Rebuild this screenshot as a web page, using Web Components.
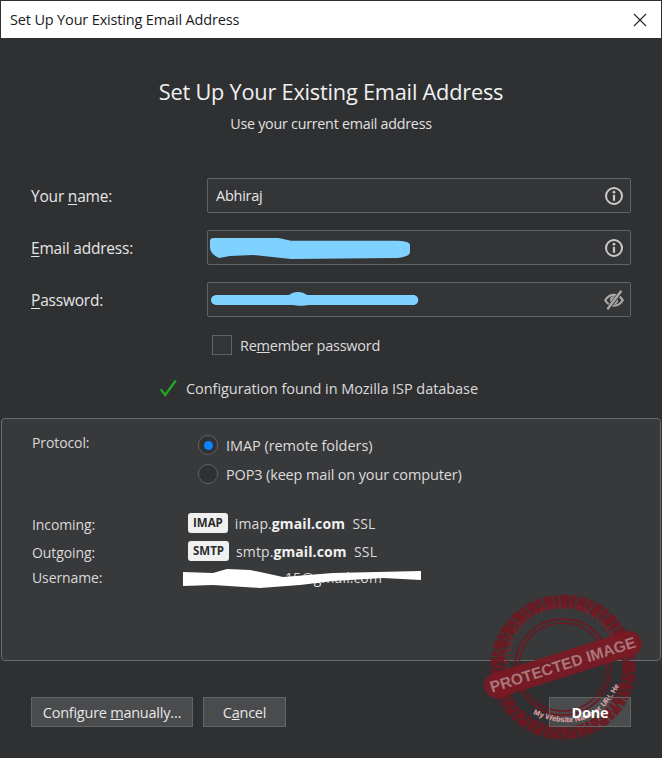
<!DOCTYPE html>
<html lang="en"><head><meta charset="utf-8"><title>Set Up Your Existing Email Address</title>
<style>
html,body{margin:0;padding:0;background:#2f3032}
body{width:662px;height:758px;overflow:hidden;font-family:"Open Sans","Noto Sans","Liberation Sans",sans-serif;color:#e6e6e7}
</style></head><body>
<account-dialog></account-dialog>
<script>
function def(name,html){
  customElements.define(name,class extends HTMLElement{
    connectedCallback(){
      if(this.shadowRoot)return;
      const r=this.attachShadow({mode:'open'});
      r.innerHTML=typeof html==='function'?html(this):html;
    }
  });
}
const info='<svg width="20" height="20" viewBox="0 0 20 20" fill="none"><circle cx="10" cy="10" r="8" stroke="#c9c9ca" stroke-width="2"/><circle cx="10" cy="6.200" r="1.400" fill="#c9c9ca"/><rect x="8.900" y="8.800" width="2.200" height="6" fill="#c9c9ca"/></svg>';
const eye='<svg width="20" height="20" viewBox="0 0 20 20" fill="none"><path d="M1.200 10.200C3.400 6.600 6.400 4.800 10 4.800s6.600 1.800 8.800 5.400C16.600 13.800 13.600 15.600 10 15.600S3.400 13.800 1.200 10.200Z" stroke="#a9a9aa" stroke-width="2.200"/><circle cx="10" cy="10.200" r="4" fill="#a9a9aa"/><path d="M16.800 2 4 18.500" stroke="#343537" stroke-width="3.800"/><path d="M16.800 1.600 4 18.400" stroke="#a9a9aa" stroke-width="2.400" stroke-linecap="round"/></svg>';

def('title-bar',`<style>:host{display:flex;align-items:center;justify-content:space-between;height:37px;margin:1px 1px 0 1px;background:#fff;color:#1b1b1b;font-size:14.500px;padding:0 14px 0 9px;box-sizing:border-box}
svg{display:block}span{letter-spacing:-.16px}</style><span>Set Up Your Existing Email Address</span><svg width="14" height="14" viewBox="0 0 14 14"><path d="M1 1l12 12M13 1L1 13" stroke="#222" stroke-width="1.100"/></svg>`);

def('dialog-heading',`<style>:host{display:block;text-align:center;padding-top:39px;height:140px;box-sizing:border-box}
h1{margin:0;font-size:21.750px;font-weight:400;line-height:30px;color:#f0f0f1;letter-spacing:-.22px}
p{margin:7px 0 0;font-size:14.300px;line-height:20px;color:#e0e0e1;letter-spacing:-.25px}</style><h1>Set Up Your Existing Email Address</h1><p>Use your current email address</p>`);

def('form-field',el=>`<style>:host{display:grid;grid-template-columns:176px 424px;align-items:center;height:35px}
label{font-size:15.500px;letter-spacing:-.2px;color:#e6e6e7}u{text-underline-offset:2px}
.box{position:relative;box-sizing:border-box;height:35px;border:1px solid #626365;border-radius:2px;background:#343537;display:flex;align-items:center;justify-content:space-between;padding:0 6px 0 8px;font-size:14.500px;color:#e6e6e7;letter-spacing:-.25px}
svg{display:block}</style>
<label>${el.getAttribute('label')}</label><div class="box"><span>${el.getAttribute('value')||''}</span>${el.getAttribute('icon')==='eye'?eye:info}</div>`);

def('check-row',`<style>:host{display:flex;align-items:center;gap:8px;margin-left:212px;height:20px;font-size:14.500px;color:#dcdcdd;letter-spacing:-.25px}
i{display:block;box-sizing:border-box;width:20px;height:20px;border:1px solid #606163;background:#333436}</style><i></i><span>Re<u>m</u>ember password</span>`);

def('status-row',`<style>:host{display:flex;align-items:center;gap:9px;margin-left:159px;height:20px;font-size:14.500px;color:#dcdcdd;letter-spacing:-.06px}
svg{display:block}</style><svg width="18" height="18" viewBox="0 0 18 18" fill="none"><path d="M1.800 10.200 6.200 16 16.800 1.500" stroke="#22a422" stroke-width="2.300"/></svg><span>Configuration found in Mozilla ISP database</span>`);

def('radio-row',el=>`<style>:host{display:flex;align-items:center;gap:8px;height:20px;font-size:14.500px;color:#dcdcdd;letter-spacing:${el.getAttribute('spacing')||'-.06px'}}
i{box-sizing:border-box;width:20px;height:20px;border-radius:50%;border:1px solid #5f6062;background:#303133;display:flex;align-items:center;justify-content:center}
b{width:9px;height:9px;border-radius:50%;background:#0a84ff}</style><i>${el.hasAttribute('checked')?'<b></b>':''}</i><span><slot></slot></span>`);

def('server-row',el=>{
  const t=el.getAttribute('tag');
  return `<style>:host{display:grid;grid-template-columns:156px 1fr;align-items:center;height:20px;font-size:14px;color:#d8d8d9;letter-spacing:.1px}
  .l{padding-top:${t?'3px':'0'};letter-spacing:-.1px}
  .r{display:flex;align-items:center;gap:7px;color:#dcdcdd}.t{background:#f0f0f1;color:#2b2b2d;font-weight:700;font-size:11.500px;border-radius:3px;height:20px;line-height:20px;padding:0 5px;letter-spacing:0}</style><span class="l">${el.getAttribute('label')}</span><div class="r">${t?`<span class="t">${t}</span>`:''}<span><slot></slot></span></div>`});

def('flat-button',`<style>:host{display:inline-flex;align-items:center;justify-content:center;box-sizing:border-box;height:30px;background:#4a4b4d;border:1px solid #636466;font-size:14.500px;color:#e6e6e7;letter-spacing:-.25px}</style><slot></slot>`);

def('config-panel',`<style>:host{display:block;box-sizing:border-box;height:243px;margin:0 1px;border:1px solid #6a6b6d;border-radius:4px;background:#38393b;padding:14px 30px 0}
.top{display:grid;grid-template-columns:166px 1fr;font-size:14px;color:#d8d8d9;letter-spacing:-.1px}
.opts{display:flex;flex-direction:column;gap:9px;padding-top:2px}
.srv{display:flex;flex-direction:column;margin-top:28px;gap:8px}</style>
<div class="top"><span>Protocol:</span><div class="opts"><radio-row checked>IMAP (remote folders)</radio-row><radio-row spacing="-.15px">POP3 (keep mail on your computer)</radio-row></div></div>
<div class="srv"><slot></slot></div>`);

def('protected-stamp',`<style>:host{position:absolute;left:484px;top:592px;width:160px;height:150px;pointer-events:none;z-index:1}svg{display:block;overflow:visible}</style>
<svg width="160" height="150" viewBox="0 0 160 150">
<defs><path id="top" d="M27 84A53 53 0 0 1 128 52"/><path id="bot" d="M49 122Q108 148 136 92"/></defs>
<g fill="none" stroke="#701720" opacity=".85"><circle cx="79" cy="75" r="69" stroke-width="7" stroke-dasharray="5 2 9 1.500"/><circle cx="79" cy="75" r="63" stroke-width="7" stroke-dasharray="8 1.500 4 2"/><circle cx="79" cy="75" r="48" stroke-width="2"/><circle cx="79" cy="75" r="44" stroke-width="1.500"/></g>
<text font-family="Liberation Sans" font-size="7.500" fill="#7e1f29" font-weight="700" letter-spacing=".6"><textPath href="#top">CONTENT COPY PROTECTION PLUGIN</textPath></text>
<g transform="rotate(-17.500 79 73)"><rect x="-3" y="60" width="164" height="25" rx="12.500" fill="#7d1a23" opacity=".9"/>
<text x="79" y="78" text-anchor="middle" textLength="152" lengthAdjust="spacing" font-family="Liberation Sans" font-size="15.500" font-weight="700" fill="#a9777b">PROTECTED IMAGE</text></g>
<text font-family="Liberation Sans" font-size="7.500" fill="#e7a7ac" font-weight="700" textLength="110"><textPath href="#bot">My Website Name or URL Here</textPath></text>
</svg>`);

def('account-dialog',`<style>:host{display:block;height:758px;position:relative;overflow:hidden;background:#2f3032}
.fields{display:flex;flex-direction:column;gap:17px;padding:0 31px}
.rem{margin-top:18px}.st{margin-top:23px}.pan{margin-top:20px}
.btns{display:flex;justify-content:space-between;padding:36px 31px 0}.l{display:flex;gap:10px}
.cm{width:162px}.ca{width:83px}.dn{width:82px;font-weight:700;color:#fff;background:transparent}
.dnw{position:relative;z-index:2}
svg{position:absolute;display:block}
.wrap{position:relative}
.bg{position:absolute;left:549px;top:697px;width:82px;height:30px;background:#4a4b4d}</style>
<title-bar></title-bar>
<dialog-heading></dialog-heading>
<div class="fields wrap">
<form-field label="Your &lt;u&gt;n&lt;/u&gt;ame:" value="Abhiraj"></form-field>
<form-field label="&lt;u&gt;E&lt;/u&gt;mail address:"></form-field>
<form-field label="&lt;u&gt;P&lt;/u&gt;assword:" icon="eye"></form-field>
<svg style="left:208px;top:52px" width="206" height="36" viewBox="0 0 206 36"><path d="M6 8H70.500L83 10.700H190Q202 11 202 15V23Q200 27 189 28L83 29L45 25L22 26L11 28Q2 24 2 17V11Q2 8 6 8Z" fill="#7fd1ff"/></svg>
<svg style="left:209px;top:104px" width="212" height="36" viewBox="0 0 212 36"><path d="M8 13H80C85 9 93 9 98 13H204C211 13 211 23 204 23H100C95 24 88 24 84 23H8C0 23 0 13 8 13Z" fill="#7fd1ff"/></svg>
</div>
<check-row class="rem"></check-row>
<status-row class="st"></status-row>
<config-panel class="pan">
<server-row label="Incoming:" tag="IMAP">imap.<b style="font-weight:700;color:#f0f0f1">gmail.com</b>&nbsp; SSL</server-row>
<server-row label="Outgoing:" tag="SMTP">smtp.<b style="font-weight:700;color:#f0f0f1">gmail.com</b>&nbsp; SSL</server-row>
<server-row label="Username:" style="margin-top:-1px"><span style="margin-left:97px;color:#d8d8d9">15@gmail.com</span></server-row>
<svg style="left:183px;top:569px" width="240" height="20" viewBox="0 0 240 20"><path d="M0 3L30 4L44 0L67 1L84 4.500L100 8L150 4L238 2V11L200 9L150 12L117 16L77 19L30 16L0 17Z" fill="#fff"/></svg>
</config-panel>
<div class="bg"></div>
<protected-stamp></protected-stamp>
<div class="btns"><div class="l"><flat-button class="cm">Configure&nbsp;<u>m</u>anually…</flat-button><flat-button class="ca">C<u>a</u>ncel</flat-button></div><div class="dnw"><flat-button class="dn">Done</flat-button></div></div>`);
</script>
</body></html>
